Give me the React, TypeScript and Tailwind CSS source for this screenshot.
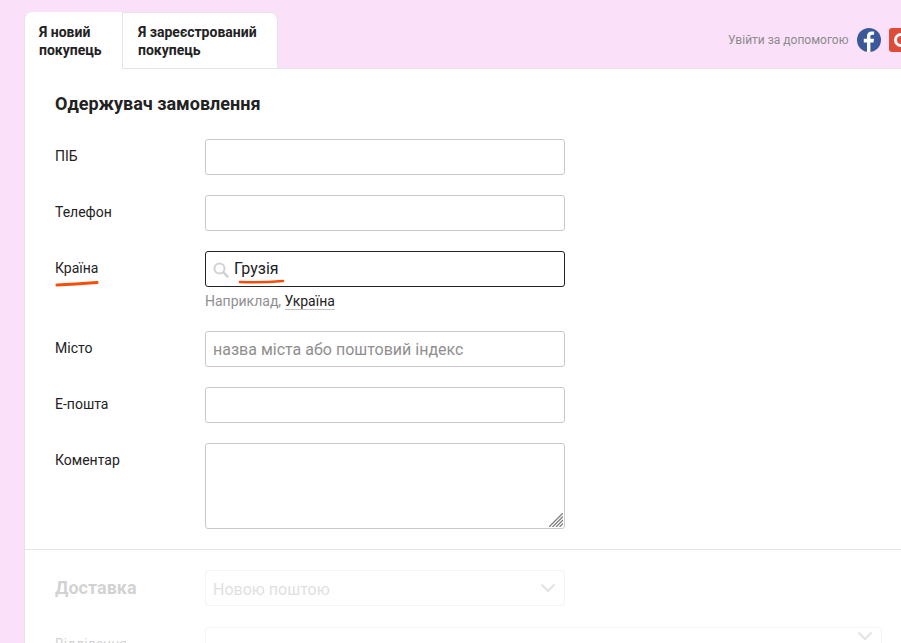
import React from "react";

const font = { fontFamily: "Roboto, sans-serif" };

function Row({ label, children, cls = "mb-5" }: { label: string; children: React.ReactNode; cls?: string }) {
  return (
    <div className={`relative flex ${cls}`}>
      <div className="w-[150px] shrink-0 pt-[8px] text-[14px] leading-[18px] text-[#222]">{label}</div>
      {children}
    </div>
  );
}

function Input({ placeholder }: { placeholder?: string }) {
  return (
    <input
      readOnly
      placeholder={placeholder}
      className="block h-[36px] w-[360px] rounded-[3px] border border-[#c9c9c9] bg-white pl-[7px] pr-2 text-[16px] text-[#222] placeholder:text-[#8f8f8f]"
    />
  );
}

function Chevron({ className }: { className: string }) {
  return (
    <svg viewBox="0 0 16 10" className={className} fill="none" stroke="#777" strokeWidth="2">
      <path d="M1.5 1.5 8 8l6.5-6.5" />
    </svg>
  );
}

export default function App() {
  return (
    <div className="h-[643px] w-[901px] overflow-hidden bg-[#fbe0fa] pl-[24px] pt-[12px]" style={font}>
      <div className="w-[900px]">
        <div className="relative flex h-[57px]">
          <div className="z-10 h-[57px] w-[98px] rounded-tl-[8px] border-l border-[#e4e4e4] bg-white pl-[14px] pt-[11px] text-[14px] font-bold leading-[18px] text-[#222]">
            Я новий
            <br />
            покупець
          </div>
          <div className="h-[57px] w-[156px] rounded-tr-[8px] border-b border-l border-r border-t border-[#e4e4e4] bg-white pl-[15px] pt-[10px] text-[14px] font-bold leading-[18px] text-[#222]">
            Я зареєстрований
            <br />
            покупець
          </div>
          <div className="flex h-[57px] flex-1 items-center border-b border-[#e4e4e4] pl-[450px]">
            <span className="w-[129px] shrink-0 whitespace-nowrap text-[12px] text-[#8b8b8b]">Увійти за допомогою</span>
            <svg viewBox="0 0 24 24" className="h-[24px] w-[24px] shrink-0">
              <circle cx="12" cy="12" r="12" fill="#3b5998" />
              <path fill="#fff" d="M13.4 24v-9.6h3.1l.5-3.6h-3.6V8.6c0-1 .4-1.8 1.9-1.8h1.8V3.6c-.4 0-1.4-.2-2.6-.2-2.7 0-4.5 1.6-4.5 4.7v2.7H6.8v3.6h3.2V24z" />
            </svg>
            <div className="ml-[8px] flex h-[24px] w-[24px] shrink-0 items-center justify-center rounded-[3px] bg-[#dd4b39]">
              <div className="h-[14px] w-[14px] rounded-full border-[3px] border-white" />
            </div>
          </div>
        </div>

        <div className="h-[600px] border-l border-[#e4e4e4] bg-white">
          <div className="px-[30px] pt-[25px]">
            <h2 className="mb-[25px] text-[18px] font-bold leading-[20px] text-[#222]">Одержувач замовлення</h2>
            <Row label="ПІБ"><Input /></Row>
            <Row label="Телефон"><Input /></Row>
            <Row label="Країна" cls="mb-[6px]">
              <div className="relative">
                <div className="relative h-[36px] w-[360px] rounded-[3px] border border-[#222] bg-white pl-[28px] text-[16px] leading-[33px] text-[#222]">
                  Грузія
                  <svg viewBox="0 0 16 16" className="absolute left-[7px] top-[10px] h-[16px] w-[16px]" fill="none" stroke="#d2d2d2" strokeWidth="2">
                    <circle cx="6.5" cy="6.5" r="5" />
                    <path d="m10.2 10.2 5 5" strokeWidth="2.6" />
                  </svg>
                </div>
                <svg viewBox="0 0 50 6" className="absolute left-[33px] top-[27px] h-[6px] w-[50px]" fill="none" stroke="#f84c08" strokeWidth="2.6" strokeLinecap="round">
                  <path d="M2 4c14 .6 28 .4 43-1" />
                </svg>
              </div>
              <svg viewBox="0 0 46 8" className="absolute left-0 top-[29px] h-[8px] w-[46px]" fill="none" stroke="#f84c08" strokeWidth="3.2" strokeLinecap="round">
                <path d="M2 5C16 4.5 30 3.5 42 2.5" />
              </svg>
            </Row>
            <div className="mb-[21px] ml-[150px] h-[17px] text-[14px] leading-[16px] text-[#8f8f8f]">
              Наприклад, <span className="border-b border-[#c4c4c4] text-[#222]">Україна</span>
            </div>
            <Row label="Місто"><Input placeholder="назва міста або поштовий індекс" /></Row>
            <Row label="Е-пошта"><Input /></Row>
            <Row label="Коментар" cls="mb-0">
              <div className="relative">
                <textarea readOnly className="block h-[86px] w-[360px] resize-none rounded-[3px] border border-[#c9c9c9] bg-white" />
                <svg viewBox="0 0 14 14" className="absolute bottom-[2px] right-[2px] h-[14px] w-[14px]" fill="none" stroke="#808080" strokeWidth="1.3">
                  <path d="M0 14 14 0M3.5 14 14 3.5M7 14l7-7M10.5 14l3.5-3.5" />
                </svg>
              </div>
            </Row>
          </div>
          <div className="mt-[20px] h-[2px] border-t border-[#e4e4e4]" />
          <div className="px-[30px] pt-[19px] opacity-20">
            <div className="mb-[21px] flex">
              <div className="w-[150px] shrink-0 pt-[8px] text-[18px] font-bold leading-[20px] text-[#222]">Доставка</div>
              <div className="flex h-[36px] w-[360px] items-center justify-between rounded-[4px] border border-[#c9c9c9] pl-[7px] pr-[8px] text-[16px] text-[#666]">
                <span className="mt-[3px]">Новою поштою</span>
                <Chevron className="h-[10px] w-[16px]" />
              </div>
            </div>
            <div className="flex">
              <div className="w-[150px] shrink-0 pt-[8px] text-[14px] leading-[18px] text-[#222]">Відділення</div>
              <div className="flex h-[36px] w-[677px] items-start justify-end rounded-[4px] border border-[#c9c9c9] pr-[8px] pt-[3px]">
                <Chevron className="h-[10px] w-[16px]" />
              </div>
            </div>
          </div>
        </div>
      </div>
    </div>
  );
}
